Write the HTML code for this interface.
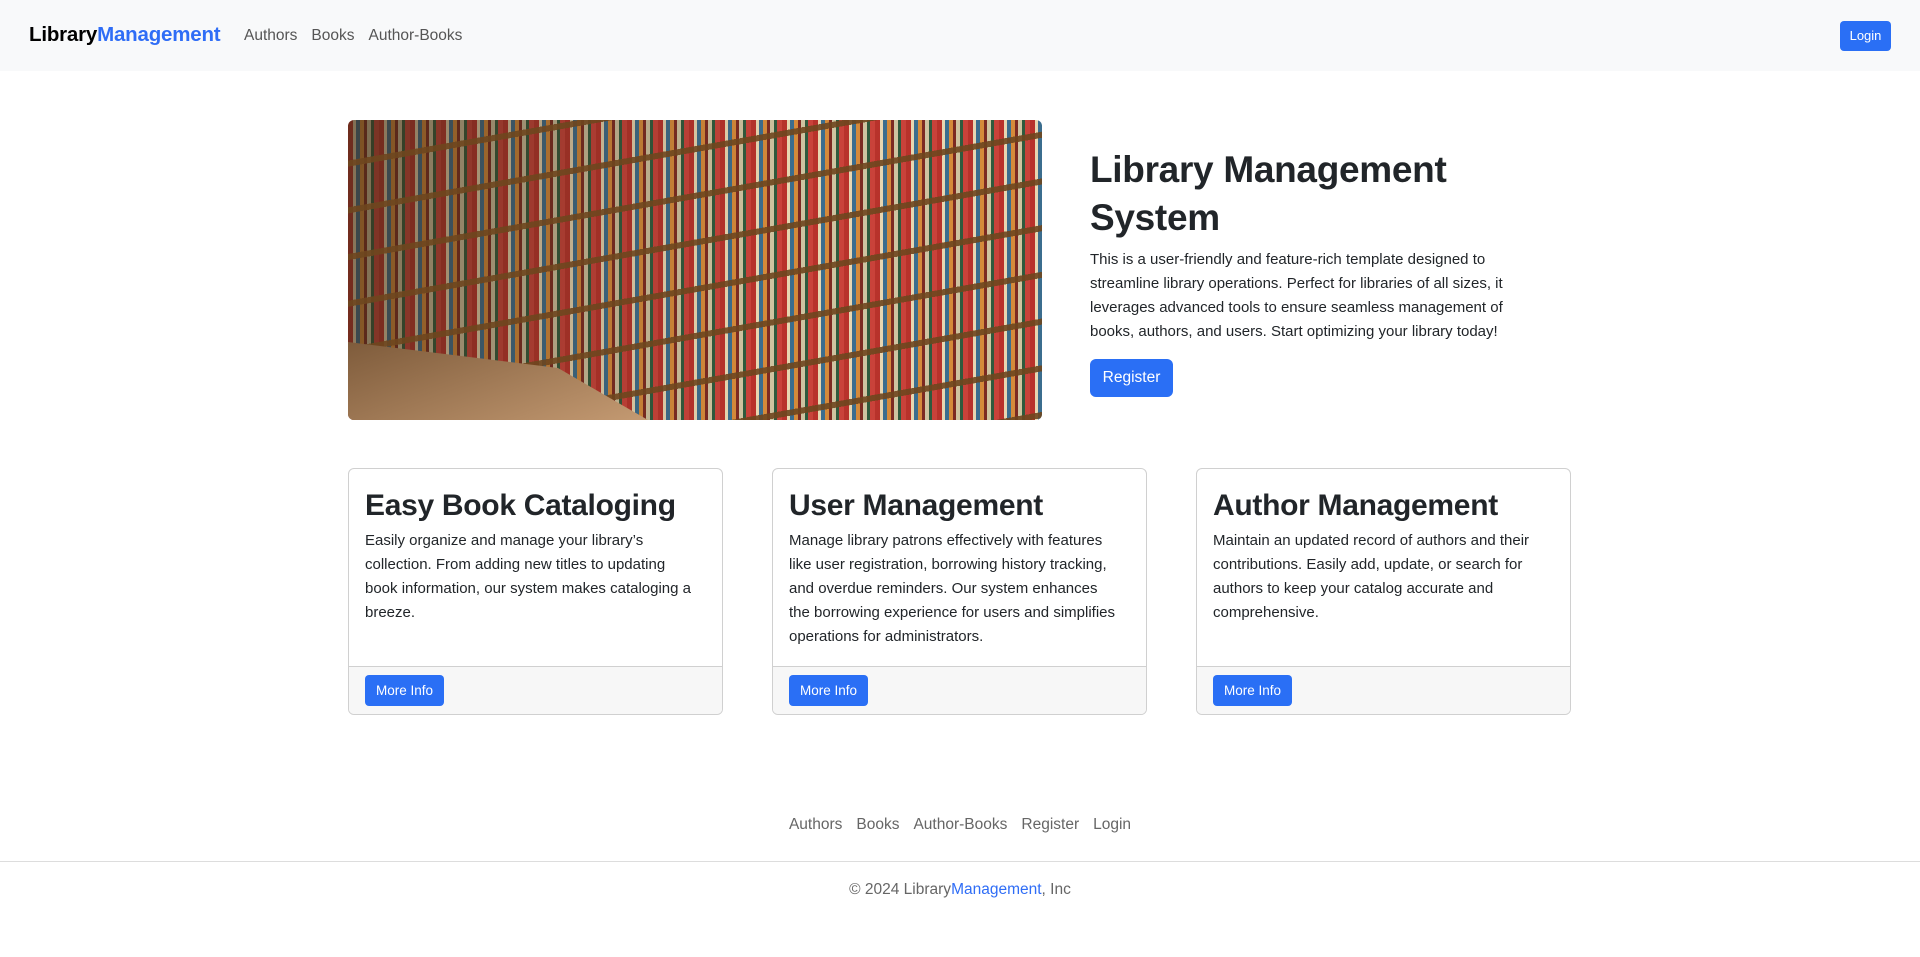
<!DOCTYPE html>
<html><head><meta charset="utf-8"><style>
*{box-sizing:border-box;margin:0;padding:0}
body{width:1920px;height:957px;overflow:hidden;background:#fff;font-family:"Liberation Sans",sans-serif;color:#212529;font-size:15px;line-height:24px}
.nav{height:71px;background:#f8f9fa;position:relative}
.brand{position:absolute;left:29px;top:23px;font-size:20.5px;font-weight:bold;color:#000;letter-spacing:-0.2px}
.brand span{color:#2f6df6}
.links{position:absolute;left:244px;top:24px;font-size:15.5px;color:#555}
.links a{margin-right:14px}
.login{position:absolute;left:1840px;top:21px;width:51px;height:30px;background:#2a6ff5;color:#fff;border-radius:4px;font-size:13px;line-height:30px;text-align:center}
.img{position:absolute;left:348px;top:120px;width:694px;height:300px;border-radius:6px;overflow:hidden;
background:
 linear-gradient(100deg,rgba(60,40,20,.6) 0%,rgba(60,40,20,.2) 35%,rgba(0,0,0,0) 60%),
 repeating-linear-gradient(90deg,#b8322b 0 5px,#e8d6b0 5px 8px,#3b6d8e 8px 12px,#d58a3a 12px 16px,#7c2a22 16px 19px,#cfc3a0 19px 23px,#2f5a3d 23px 26px,#c9423a 26px 31px);}
.img:after{content:"";position:absolute;inset:0;background:repeating-linear-gradient(170deg,rgba(120,80,30,.0) 0 40px,rgba(110,70,30,.9) 40px 46px)}
.floor{position:absolute;left:0;bottom:0;width:300px;height:130px;background:linear-gradient(160deg,#6b4a2c,#c49a72);z-index:2;clip-path:polygon(0 40%,70% 60%,100% 100%,0 100%)}
h1{position:absolute;left:1090px;top:146px;font-size:37px;line-height:48px;font-weight:bold;width:440px;letter-spacing:-0.3px}
.lead{position:absolute;left:1090px;top:248px;width:450px;font-size:15px}
.reg{position:absolute;left:1090px;top:359px;width:83px;height:38px;background:#2a6ff5;color:#fff;border-radius:6px;text-align:center;line-height:38px;font-size:15.5px}
.card{position:absolute;top:468px;width:375px;height:247px;border:1px solid #d0d0d0;border-radius:6px;overflow:hidden}
.card h2{font-size:30px;font-weight:bold;line-height:38px;margin:18px 16px 4px;white-space:nowrap;letter-spacing:-0.3px}
.card p{margin:0 26px 0 16px;font-size:15px;line-height:24px}
.foot{position:absolute;left:0;right:0;bottom:0;height:48px;background:#f7f7f7;border-top:1px solid #d0d0d0}
.foot div{position:absolute;left:16px;top:8px;width:79px;height:31px;background:#2a6ff5;color:#fff;border-radius:4px;font-size:13.5px;line-height:31px;text-align:center}
.fl{position:absolute;top:813px;left:0;width:1920px;text-align:center;color:#666;font-size:15.5px}
.fl a{margin:0 7px}
.hr{position:absolute;top:861px;left:0;width:1920px;border-top:1px solid #ddd}
.copy{position:absolute;top:878px;width:1920px;text-align:center;color:#666;font-size:15.5px}
.copy span{color:#2f6df6}
</style></head><body>
<div class="nav"><div class="brand">Library<span>Management</span></div>
<div class="links"><a>Authors</a><a>Books</a><a>Author-Books</a></div>
<div class="login">Login</div></div>
<div class="img"><div class="floor"></div></div>
<h1>Library Management System</h1>
<p class="lead">This is a user-friendly and feature-rich template designed to streamline library operations. Perfect for libraries of all sizes, it leverages advanced tools to ensure seamless management of books, authors, and users. Start optimizing your library today!</p>
<div class="reg">Register</div>
<div class="card" style="left:348px"><h2>Easy Book Cataloging</h2><p>Easily organize and manage your library’s collection. From adding new titles to updating book information, our system makes cataloging a breeze.</p><div class="foot"><div>More Info</div></div></div>
<div class="card" style="left:772px"><h2>User Management</h2><p>Manage library patrons effectively with features like user registration, borrowing history tracking, and overdue reminders. Our system enhances the borrowing experience for users and simplifies operations for administrators.</p><div class="foot"><div>More Info</div></div></div>
<div class="card" style="left:1196px"><h2>Author Management</h2><p>Maintain an updated record of authors and their contributions. Easily add, update, or search for authors to keep your catalog accurate and comprehensive.</p><div class="foot"><div>More Info</div></div></div>
<div class="fl"><a>Authors</a><a>Books</a><a>Author-Books</a><a>Register</a><a>Login</a></div>
<div class="hr"></div>
<div class="copy">© 2024 Library<span>Management</span>, Inc</div>
</body></html>
